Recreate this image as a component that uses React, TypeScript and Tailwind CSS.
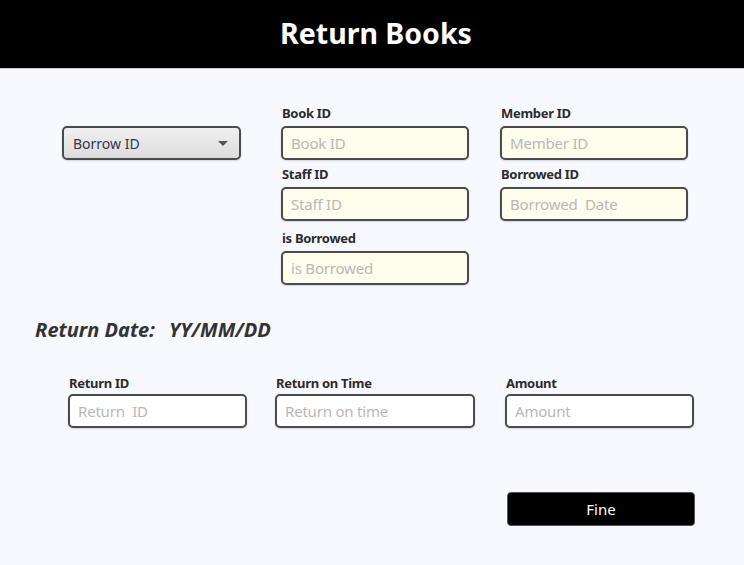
import React from "react";

const YELLOW_FIELDS = [
  { label: "Book ID", placeholder: "Book ID" },
  { label: "Member ID", placeholder: "Member ID" },
  { label: "Staff ID", placeholder: "Staff ID" },
  { label: "Borrowed ID", placeholder: "Borrowed  Date" },
  { label: "is Borrowed", placeholder: "is Borrowed" },
];

const RETURN_FIELDS = [
  { label: "Return ID", placeholder: "Return  ID", width: "w-[179px]" },
  { label: "Return on Time", placeholder: "Return on time", width: "w-[200px]" },
  { label: "Amount", placeholder: "Amount", width: "w-[189px] ml-[2px]" },
];

function Field({
  label,
  placeholder,
  yellow,
  className,
}: {
  label: string;
  placeholder: string;
  yellow?: boolean;
  className?: string;
}) {
  return (
    <div className={`flex flex-col ${className ?? ""}`}>
      <span className="text-[13px] font-bold leading-[16px] tracking-[-0.3px] text-[#2b2b2b] pl-px">
        {label}
      </span>
      <input
        placeholder={placeholder}
        className={`h-[34px] w-full rounded-[5px] border-2 border-[#4b4b4b] px-[8px] text-[15px] tracking-[-0.2px] outline-none shadow-[0_1px_2px_rgba(0,0,0,0.15)] placeholder:text-[#b8b8b8] ${
          yellow ? "mt-[5px] bg-[#fefeec]" : "mt-[3px] bg-white"
        }`}
      />
    </div>
  );
}

export default function App() {
  return (
    <div className="w-[744px] h-[565px] bg-[#f8f8ff] font-['Noto_Sans',sans-serif] overflow-hidden">
      <header className="h-[69px] bg-black border-b border-[#c8c8c8] flex items-center justify-center pl-[8px]">
        <h1 className="text-[28.5px] font-bold text-white leading-none pb-[1px]">
          Return Books
        </h1>
      </header>

      <div className="flex pl-[62px] pt-[36px]">
        <button className="mt-[21px] h-[34px] w-[179px] rounded-[5px] border-2 border-[#4b4b4b] bg-gradient-to-b from-[#f0f0f0] to-[#dcdcdc] flex items-center justify-between pl-[9px] pr-[11px] shadow-[0_1px_2px_rgba(0,0,0,0.15)]">
          <span className="text-[14px] text-[#36334a]">Borrow ID</span>
          <svg width="10" height="5" viewBox="0 0 10 5">
            <path d="M0 0h10L5 5z" fill="#555" />
          </svg>
        </button>

        <div className="ml-[40px] grid grid-cols-[188px_188px] gap-x-[31px] gap-y-[6px]">
          {YELLOW_FIELDS.map((f, i) => (
            <Field
              key={f.label}
              label={f.label}
              placeholder={f.placeholder}
              yellow
              className={i === 4 ? "mt-[3px]" : ""}
            />
          ))}
        </div>
      </div>

      <div className="pl-[35px] mt-[33px] flex items-center gap-[14px] text-[20px] font-bold italic text-[#333] leading-[24px]">
        <span>Return Date:</span>
        <span>YY/MM/DD</span>
      </div>

      <div className="flex pl-[68px] mt-[33px] gap-[28px]">
        {RETURN_FIELDS.map((f) => (
          <Field
            key={f.label}
            label={f.label}
            placeholder={f.placeholder}
            className={f.width}
          />
        ))}
      </div>

      <div className="flex pl-[507px] mt-[64px]">
        <button className="h-[34px] w-[188px] rounded-[4px] bg-black text-white text-[15px] border border-[#555]">
          Fine
        </button>
      </div>
    </div>
  );
}
